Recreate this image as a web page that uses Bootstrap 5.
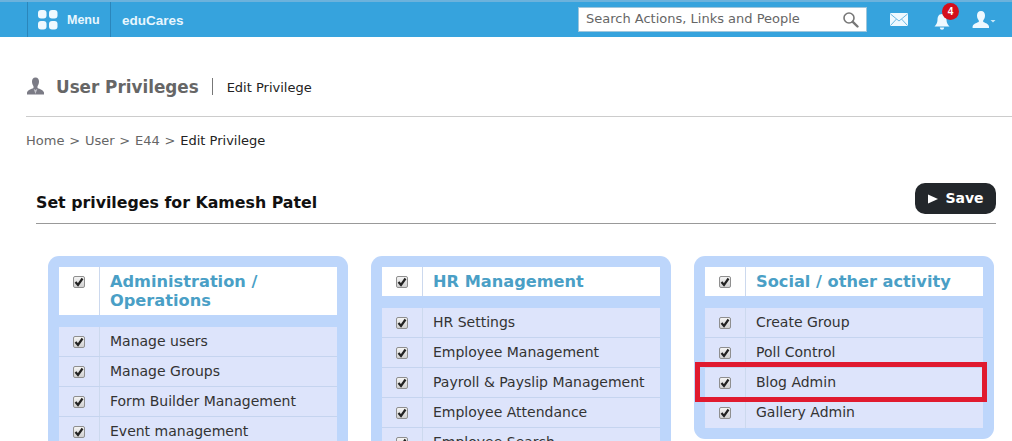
<!DOCTYPE html>
<html lang="en"><head><meta charset="utf-8"><title>User Privileges</title>
<link href="https://cdn.jsdelivr.net/npm/bootstrap@5.3.0/dist/css/bootstrap.min.css" rel="stylesheet">
<style>
html,body{height:441px;overflow:hidden}
body{font-family:"DejaVu Sans",Verdana,sans-serif;font-size:14px;color:#333;background:#fff;position:relative}
.topbar{height:37px;background:#36a3dd;border-top:2px solid #6cb2dc;padding-left:27px;color:#e8f6fd}
.menu-cell{width:84px;height:35px;border-left:1px solid #2b86bb;border-right:1px solid #2b86bb;padding-left:10px;gap:9px;font:700 12.5px "Liberation Sans",Arial,sans-serif}
.brand-cell{padding-left:11px;font:700 13.5px "Liberation Sans",Arial,sans-serif;padding-top:2px}
.searchbox{width:289px;height:25px;background:#fff;border:1px solid #9fc6dc;margin-right:23px;padding:0 7px 0 7px;font-size:13px;color:#666;margin-top:-1px}
.notif{position:relative;width:18px;height:18px;margin-left:25px}
.redbadge{position:absolute;left:9px;top:-8px;width:17px;height:17px;border-radius:50%;background:#d40f1c;color:#fff;font:700 10px/17px "Liberation Sans",Arial,sans-serif;text-align:center}
.user-ico{margin-left:21px;margin-right:16px}
.pagehead{margin:0 0 0 26px;height:80px;padding-top:40px;border-bottom:1px solid #ccc}
.pagehead h1{font-size:16.8px;font-weight:700;color:#666;margin:0 0 0 11px;line-height:21px}
.head-sep{width:1px;height:17px;background:#777;margin:1px 14px 0 13px}
.head-sub{font-size:13px;color:#222;line-height:21px}
.crumbs{margin:15px 0 0 26px;font-size:13px;color:#666;line-height:18px;display:flex;gap:4.8px}
.crumbs b{font-weight:400;color:#222}
.titlebar{margin:33px 16px 0 36px;height:41px;border-bottom:1px solid #999}
.titlebar h2{font-size:15.8px;font-weight:700;color:#111;margin:0;padding-top:10px;line-height:20px}
.savebtn{background:#23272b;color:#fff;border:0;border-radius:10px;width:81px;height:31px;font-size:14px;font-weight:700;padding:0 0 0 1px;gap:7px;--bs-btn-hover-bg:#23272b;--bs-btn-hover-color:#fff}
.panels{margin:32px 0 0 48px;gap:23px;align-items:flex-start}
.privbox{width:300px;background:#bdd6fb;border-radius:11px;padding:11px}
.privhead{background:#fff;margin-bottom:12px}
.chkcell{width:41px;flex:none;border-right:1px solid #ccd9ee;display:flex;justify-content:center;padding-top:9px}
.privhead h3{font-size:16.2px;font-weight:700;color:#4a9fc6;margin:0;padding:5px 10px 5px;line-height:19px}
.privrow{background:#dde4fb;height:30px;border-bottom:1px solid #c5d4ef;color:#333}
.privrow:last-child{border-bottom:0}
.rowlabel{padding:0 10px;line-height:28px}
.chkwrap{position:relative;width:12px;height:12px;display:block}
.chk{appearance:none;display:block;width:12px;height:12px;margin:0;border:1px solid #8f8f8f;border-radius:2px;background:linear-gradient(#f4f4f4,#d0d0d0)}
.chkmark{position:absolute;left:1px;top:1px;width:10px;height:10px;pointer-events:none}
.callout{position:absolute;left:695px;top:362px;width:292px;height:40px;border:5px solid #e01a2f;pointer-events:none}
</style></head>
<body>
<svg width="0" height="0" class="d-none"><symbol id="tick" viewBox="0 0 10 10"><path d="M1.5 5L4 8L8.5 1.5" fill="none" stroke="#222" stroke-width="2.2"/></symbol></svg>
<nav class="topbar d-flex align-items-center">
  <div class="menu-cell d-flex align-items-center">
    <svg width="20" height="20" viewBox="0 0 20 20" fill="#eef9ff"><rect x="0" y="0" width="8.5" height="8.5" rx="3"/><rect x="11" y="0" width="8.5" height="8.5" rx="3"/><rect x="0" y="11" width="8.5" height="8.5" rx="3"/><rect x="11" y="11" width="8.5" height="8.5" rx="3"/></svg>
    <span>Menu</span>
  </div>
  <div class="brand-cell">eduCares</div>
  <div class="ms-auto d-flex align-items-center">
    <div class="searchbox d-flex align-items-center justify-content-between">
      <span>Search Actions, Links and People</span>
      <svg width="17" height="17" viewBox="0 0 17 17" fill="none" stroke="#777"><circle cx="7" cy="7" r="5" stroke-width="1.6"/><path d="M10.8 10.8L15.5 15.5" stroke-width="2.4" stroke-linecap="round"/></svg>
    </div>
    <svg width="18" height="13" viewBox="0 0 18 13"><rect width="18" height="13" rx="1" fill="#eef9ff"/><path d="M0.5 1L9 8L17.5 1M0.5 12.5L6.5 6M17.5 12.5L11.5 6" fill="none" stroke="#6db8e2" stroke-width="1"/></svg>
    <div class="notif">
      <svg width="18" height="18" viewBox="0 0 18 18" fill="#eef9ff"><path d="M9 1C5.5 1 4.5 4 4.5 7C4.5 10 3 12 1.5 13.5H16.5C15 12 13.5 10 13.5 7C13.5 4 12.5 1 9 1Z"/><path d="M6.8 14.6H11.2C11 16 10.2 16.8 9 16.8C7.8 16.8 7 16 6.8 14.6Z"/></svg>
      <span class="redbadge">4</span>
    </div>
    <svg class="user-ico" width="24" height="18" viewBox="0 0 24 18" fill="#eef9ff"><path d="M9 0C11.6 0 13 2 13 4.6C13 7 12 8.6 11.2 9.4V11C13.5 12 16.5 12.8 17 15.5V17H0.6V15.5C1.2 12.8 4.4 12 6.8 11V9.4C6 8.6 5 7 5 4.6C5 2 6.4 0 9 0Z"/><path d="M18.5 9H23.5L21 11.5Z" fill="#c9e7f7"/></svg>
  </div>
</nav>

<div class="pagehead d-flex align-items-start">
  <svg width="19" height="19" viewBox="0 0 19 19" fill="#7b7b85"><path d="M9.5 0.5C12 0.5 13 2.3 13 4.6C13 6.8 12.2 8.4 11.5 9.2V11C13.8 12 17.4 13 18 15.5V17.5H1V15.5C1.6 13 5.2 12 7.5 11V9.2C6.8 8.4 6 6.8 6 4.6C6 2.3 7 .5 9.5 .5Z"/><path d="M9.5 17L7.6 11.8L9.5 13L11.4 11.8Z" fill="#c4c4ca"/></svg>
  <h1>User Privileges</h1>
  <span class="head-sep"></span>
  <span class="head-sub">Edit Privilege</span>
</div>

<div class="crumbs"><span>Home</span><span>&gt;</span><span>User</span><span>&gt;</span><span>E44</span><span>&gt;</span><b>Edit Privilege</b></div>

<div class="titlebar d-flex justify-content-between align-items-start">
  <h2>Set privileges for Kamesh Patel</h2>
  <button type="button" class="btn savebtn d-flex align-items-center justify-content-center"><svg width="10" height="10" viewBox="0 0 10 10" fill="#fff"><path d="M0 0.5L10 5L0 9.5Z"/></svg><span>Save</span></button>
</div>

<div class="panels d-flex">
  <section class="privbox">
    <div class="privhead d-flex"><div class="chkcell"><span class="chkwrap"><input class="chk" type="checkbox" checked aria-label="Administration"><svg class="chkmark"><use href="#tick"/></svg></span></div><h3>Administration / Operations</h3></div>
    <div>
      <div class="privrow d-flex"><div class="chkcell"><span class="chkwrap"><input class="chk" type="checkbox" checked aria-label="Manage users"><svg class="chkmark"><use href="#tick"/></svg></span></div><span class="rowlabel">Manage users</span></div>
      <div class="privrow d-flex"><div class="chkcell"><span class="chkwrap"><input class="chk" type="checkbox" checked aria-label="Manage Groups"><svg class="chkmark"><use href="#tick"/></svg></span></div><span class="rowlabel">Manage Groups</span></div>
      <div class="privrow d-flex"><div class="chkcell"><span class="chkwrap"><input class="chk" type="checkbox" checked aria-label="Form Builder Management"><svg class="chkmark"><use href="#tick"/></svg></span></div><span class="rowlabel">Form Builder Management</span></div>
      <div class="privrow d-flex"><div class="chkcell"><span class="chkwrap"><input class="chk" type="checkbox" checked aria-label="Event management"><svg class="chkmark"><use href="#tick"/></svg></span></div><span class="rowlabel">Event management</span></div>
    </div>
  </section>
  <section class="privbox">
    <div class="privhead d-flex"><div class="chkcell"><span class="chkwrap"><input class="chk" type="checkbox" checked aria-label="HR Management"><svg class="chkmark"><use href="#tick"/></svg></span></div><h3>HR Management</h3></div>
    <div>
      <div class="privrow d-flex"><div class="chkcell"><span class="chkwrap"><input class="chk" type="checkbox" checked aria-label="HR Settings"><svg class="chkmark"><use href="#tick"/></svg></span></div><span class="rowlabel">HR Settings</span></div>
      <div class="privrow d-flex"><div class="chkcell"><span class="chkwrap"><input class="chk" type="checkbox" checked aria-label="Employee Management"><svg class="chkmark"><use href="#tick"/></svg></span></div><span class="rowlabel">Employee Management</span></div>
      <div class="privrow d-flex"><div class="chkcell"><span class="chkwrap"><input class="chk" type="checkbox" checked aria-label="Payroll"><svg class="chkmark"><use href="#tick"/></svg></span></div><span class="rowlabel">Payroll &amp; Payslip Management</span></div>
      <div class="privrow d-flex"><div class="chkcell"><span class="chkwrap"><input class="chk" type="checkbox" checked aria-label="Employee Attendance"><svg class="chkmark"><use href="#tick"/></svg></span></div><span class="rowlabel">Employee Attendance</span></div>
      <div class="privrow d-flex"><div class="chkcell"><span class="chkwrap"><input class="chk" type="checkbox" checked aria-label="Employee Search"><svg class="chkmark"><use href="#tick"/></svg></span></div><span class="rowlabel">Employee Search</span></div>
    </div>
  </section>
  <section class="privbox">
    <div class="privhead d-flex"><div class="chkcell"><span class="chkwrap"><input class="chk" type="checkbox" checked aria-label="Social"><svg class="chkmark"><use href="#tick"/></svg></span></div><h3>Social / other activity</h3></div>
    <div>
      <div class="privrow d-flex"><div class="chkcell"><span class="chkwrap"><input class="chk" type="checkbox" checked aria-label="Create Group"><svg class="chkmark"><use href="#tick"/></svg></span></div><span class="rowlabel">Create Group</span></div>
      <div class="privrow d-flex"><div class="chkcell"><span class="chkwrap"><input class="chk" type="checkbox" checked aria-label="Poll Control"><svg class="chkmark"><use href="#tick"/></svg></span></div><span class="rowlabel">Poll Control</span></div>
      <div class="privrow d-flex"><div class="chkcell"><span class="chkwrap"><input class="chk" type="checkbox" checked aria-label="Blog Admin"><svg class="chkmark"><use href="#tick"/></svg></span></div><span class="rowlabel">Blog Admin</span></div>
      <div class="privrow d-flex"><div class="chkcell"><span class="chkwrap"><input class="chk" type="checkbox" checked aria-label="Gallery Admin"><svg class="chkmark"><use href="#tick"/></svg></span></div><span class="rowlabel">Gallery Admin</span></div>
    </div>
  </section>
</div>
<div class="callout"></div>
<script src="https://cdn.jsdelivr.net/npm/bootstrap@5.3.0/dist/js/bootstrap.bundle.min.js"></script>
</body></html>
